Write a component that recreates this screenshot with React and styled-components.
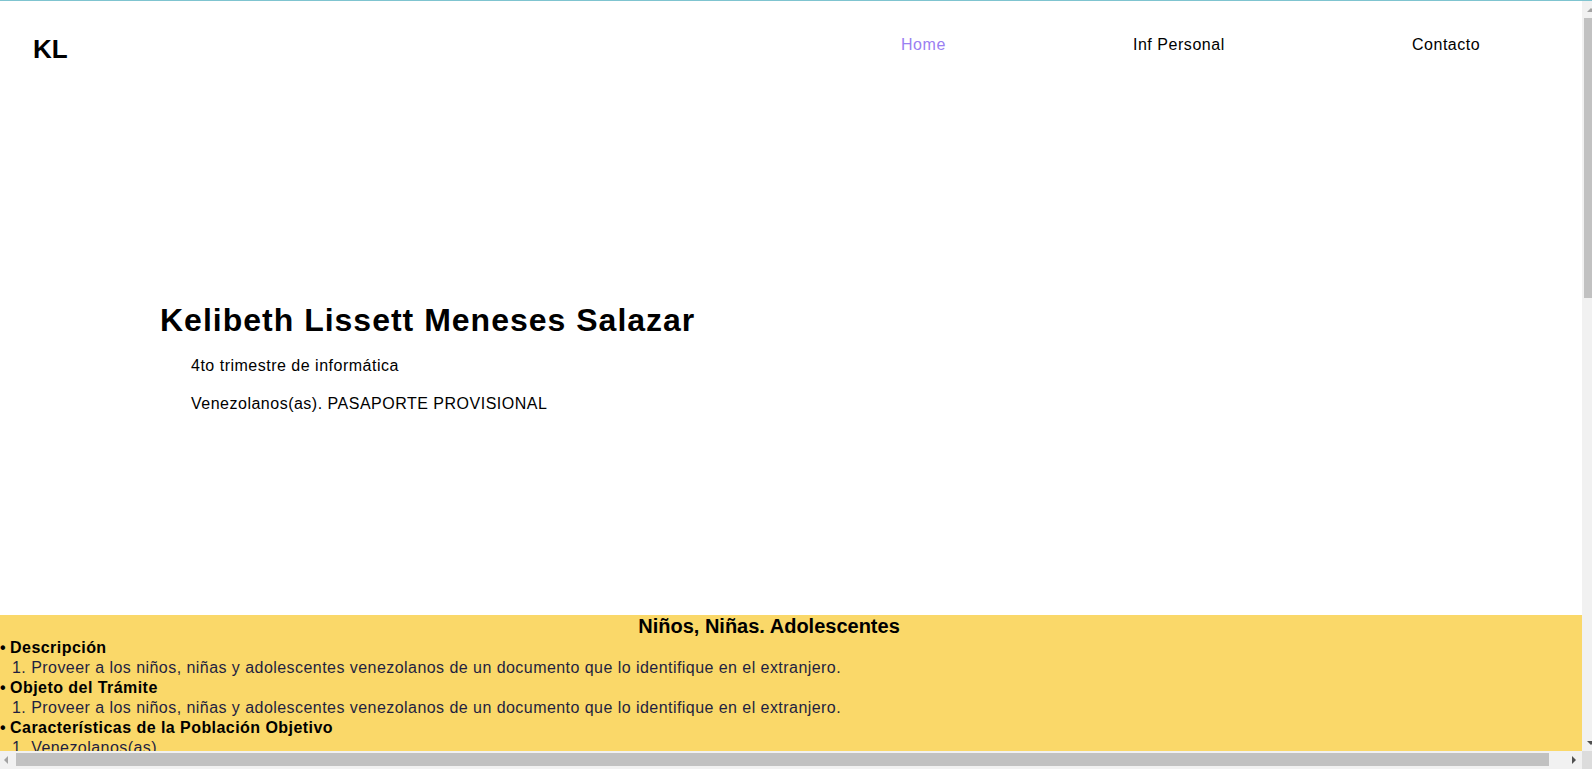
import React from "react";
import styled, { createGlobalStyle, css } from "styled-components";

const GlobalStyle = createGlobalStyle`
  html {
    scrollbar-width: none;
  }
  html, body {
    margin: 0;
    padding: 0;
    background: #ffffff;
  }
  body {
    font-family: "Liberation Sans", Arial, Helvetica, sans-serif;
    color: #000000;
  }
`;

/* ---------- page ---------- */

const Page = styled.div`
  min-width: 1600px;
  border-top: 1px solid #7fc4d0;
`;

const Header = styled.header`
  display: grid;
  grid-template-columns: 901px 1fr;
  align-items: start;
  height: 88px;
`;

const Logo = styled.div`
  padding: 33px 0 0 33px;
  font-size: 26px;
  font-weight: bold;
  line-height: normal;
`;

const Nav = styled.nav`
  display: flex;
  gap: 187px;
  padding-top: 35px;
`;

const NavLink = styled.a`
  font-size: 16px;
  line-height: normal;
  letter-spacing: 0.55px;
  text-decoration: none;
  color: ${(p) => (p.$active ? "#9a80f2" : "#000000")};
  cursor: pointer;
`;

const Hero = styled.section`
  height: 526px;
  box-sizing: border-box;
  padding: 213px 0 0 160px;
`;

const Name = styled.h1`
  margin: 0 0 16px;
  font-size: 32px;
  font-weight: bold;
  line-height: normal;
  letter-spacing: 1px;
`;

const HeroText = styled.p`
  margin: 0 0 16px 31px;
  font-size: 16px;
  line-height: 22px;
  letter-spacing: 0.5px;
`;

const Info = styled.section`
  min-height: 1311px;
  background: #fad869;
`;

const InfoTitle = styled.h2`
  width: 1538px;
  margin: 0;
  text-align: center;
  font-size: 20px;
  font-weight: bold;
  line-height: normal;
`;

const Groups = styled.ul`
  list-style: none;
  margin: 0;
  padding: 0;
`;

const Group = styled.li`
  font-size: 16px;
  line-height: 20px;
  letter-spacing: 0.45px;
`;

const GroupLabel = styled.div`
  font-weight: bold;
  &::before {
    content: "• ";
    letter-spacing: 0;
  }
`;

const Items = styled.ol`
  margin: 0;
  padding-left: 12px;
  list-style-position: inside;
  color: #1f1f40;
`;

const Item = styled.li``;

/* ---------- window scrollbars (drawn over the page edges) ---------- */

const arrowShapes = {
  up: css`
    border-width: 0 4px 4px 4px;
    border-bottom-color: ${(p) => p.$color};
  `,
  down: css`
    border-width: 4px 4px 0 4px;
    border-top-color: ${(p) => p.$color};
  `,
  left: css`
    border-width: 4px 4px 4px 0;
    border-right-color: ${(p) => p.$color};
  `,
  right: css`
    border-width: 4px 0 4px 4px;
    border-left-color: ${(p) => p.$color};
  `,
};

const Arrow = styled.span`
  display: block;
  width: 0;
  height: 0;
  border-style: solid;
  border-color: transparent;
  ${(p) => arrowShapes[p.$dir]}
`;

const VBar = styled.div`
  position: fixed;
  top: 1px;
  right: 0;
  width: 10px;
  height: 750px;
  overflow: hidden;
  background: #f1f1f1;
`;

const VInner = styled.div`
  width: 17px;
  height: 100%;
  display: flex;
  flex-direction: column;
`;

const VButton = styled.div`
  flex: 0 0 17px;
  display: flex;
  align-items: center;
  justify-content: center;
`;

const VThumb = styled.div`
  flex: 0 0 280px;
  margin: 0 2px;
  background: #c1c1c1;
`;

const Spacer = styled.div`
  flex: 1;
`;

const HBar = styled.div`
  position: fixed;
  left: 0;
  bottom: 0;
  width: 1582px;
  height: 18px;
  display: flex;
  align-items: flex-start;
  background: #f1f1f1;
`;

const HButton = styled.div`
  flex: 0 0 16px;
  height: 17px;
  display: flex;
  align-items: center;
  padding-left: ${(p) => p.$inset}px;
  box-sizing: border-box;
`;

const HThumb = styled.div`
  flex: 0 0 1533px;
  height: 13px;
  margin-top: 2px;
  background: #c1c1c1;
`;

const Corner = styled.div`
  position: fixed;
  right: 0;
  bottom: 0;
  width: 10px;
  height: 18px;
  background: #dcdcdc;
`;

const groups = [
  {
    label: "Descripción",
    items: [
      "Proveer a los niños, niñas y adolescentes venezolanos de un documento que lo identifique en el extranjero.",
    ],
  },
  {
    label: "Objeto del Trámite",
    items: [
      "Proveer a los niños, niñas y adolescentes venezolanos de un documento que lo identifique en el extranjero.",
    ],
  },
  {
    label: "Características de la Población Objetivo",
    items: ["Venezolanos(as)"],
  },
];

export default function App() {
  return (
    <>
      <GlobalStyle />
      <Page>
        <Header>
          <Logo>KL</Logo>
          <Nav>
            <NavLink $active>Home</NavLink>
            <NavLink>Inf Personal</NavLink>
            <NavLink>Contacto</NavLink>
          </Nav>
        </Header>
        <Hero>
          <Name>Kelibeth Lissett Meneses Salazar</Name>
          <HeroText>4to trimestre de informática</HeroText>
          <HeroText>Venezolanos(as). PASAPORTE PROVISIONAL</HeroText>
        </Hero>
        <Info>
          <InfoTitle>Niños, Niñas. Adolescentes</InfoTitle>
          <Groups>
            {groups.map((g) => (
              <Group key={g.label}>
                <GroupLabel>{g.label}</GroupLabel>
                <Items>
                  {g.items.map((t, i) => (
                    <Item key={i}>{t}</Item>
                  ))}
                </Items>
              </Group>
            ))}
          </Groups>
        </Info>
      </Page>

      <VBar>
        <VInner>
          <VButton>
            <Arrow $dir="up" $color="#a3a3a3" />
          </VButton>
          <VThumb />
          <Spacer />
          <VButton>
            <Arrow $dir="down" $color="#505050" />
          </VButton>
        </VInner>
      </VBar>
      <HBar>
        <HButton $inset={4}>
          <Arrow $dir="left" $color="#a3a3a3" />
        </HButton>
        <HThumb />
        <Spacer />
        <HButton $inset={6}>
          <Arrow $dir="right" $color="#505050" />
        </HButton>
      </HBar>
      <Corner />
    </>
  );
}
